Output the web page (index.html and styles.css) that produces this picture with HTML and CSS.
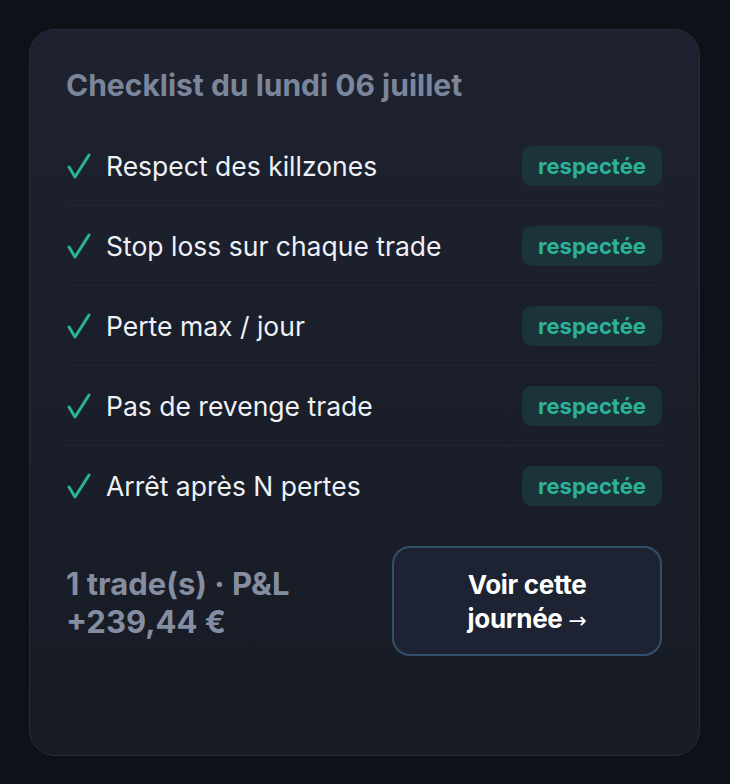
FILE: index.html
```html
<!DOCTYPE html>
<html lang="fr">
<head>
    <meta charset="UTF-8">
    <meta name="viewport" content="width=device-width, initial-scale=1.0">
    <title>Checklist du jour</title>
    <link rel="stylesheet" href="styles.css">
</head>
<body>

    <!-- Daily checklist card -->
    <div class="day-card">
        <h3 class="day-title">Checklist du lundi 06 juillet</h3>

        <ul class="rules">
            <li class="rule">
                <svg class="check" viewBox="0 0 24 26"><path d="M2 14 L8 24 L22 2"/></svg>
                <span class="rule-name">Respect des killzones</span>
                <span class="badge">respectée</span>
            </li>
            <li class="rule">
                <svg class="check" viewBox="0 0 24 26"><path d="M2 14 L8 24 L22 2"/></svg>
                <span class="rule-name">Stop loss sur chaque trade</span>
                <span class="badge">respectée</span>
            </li>
            <li class="rule">
                <svg class="check" viewBox="0 0 24 26"><path d="M2 14 L8 24 L22 2"/></svg>
                <span class="rule-name">Perte max / jour</span>
                <span class="badge">respectée</span>
            </li>
            <li class="rule">
                <svg class="check" viewBox="0 0 24 26"><path d="M2 14 L8 24 L22 2"/></svg>
                <span class="rule-name">Pas de revenge trade</span>
                <span class="badge">respectée</span>
            </li>
            <li class="rule">
                <svg class="check" viewBox="0 0 24 26"><path d="M2 14 L8 24 L22 2"/></svg>
                <span class="rule-name">Arrêt après N pertes</span>
                <span class="badge">respectée</span>
            </li>
        </ul>

        <div class="day-footer">
            <div class="day-summary">1 trade(s) · P&amp;L<br>+239,44 €</div>
            <button class="day-link">Voir cette<br>journée <span class="arrow">→</span></button>
        </div>
    </div>

</body>
</html>
```

FILE: styles.css
```css
body {
    margin: 0;
    background-color: #0e1117;
    font-family: Inter, "Noto Sans", sans-serif;
    padding: 29px 30px 29px 29px;
}

/* Card */
.day-card {
    box-sizing: border-box;
    width: 671px;
    height: 727px;
    padding: 37px 37px 0 36px;
    border: 1px solid #262c3a;
    border-radius: 26px;
    background: linear-gradient(180deg, #1e2230 0%, #171b24 100%);
}
.day-title {
    margin: 0 0 23px 0;
    font-size: 30px;
    line-height: 36px;
    font-weight: 700;
    color: #7b869b;
}

/* Rules list */
.rules {
    list-style: none;
    margin: 0;
    padding: 0;
}
.rule {
    display: flex;
    align-items: center;
    height: 79px;
    border-bottom: 1px solid #222736;
}
.rule:last-child {
    border-bottom: none;
}
.check {
    width: 24px;
    height: 26px;
    margin-left: 1px;
    margin-right: 15px;
    fill: none;
    stroke: #2bb39a;
    stroke-width: 3;
    stroke-linecap: round;
    stroke-linejoin: round;
}
.rule-name {
    flex: 1;
    font-size: 26.5px;
    color: #eef1f6;
}
.badge {
    width: 140px;
    height: 40px;
    line-height: 40px;
    text-align: center;
    border-radius: 10px;
    background-color: #1b3439;
    color: #2bb39a;
    font-size: 22px;
    font-weight: 700;
}

/* Footer */
.day-footer {
    display: flex;
    justify-content: space-between;
    align-items: center;
    margin-top: 21px;
}
.day-summary {
    padding-top: 4px;
    font-size: 31px;
    line-height: 38px;
    font-weight: 700;
    color: #858ea1;
}
.day-link {
    width: 270px;
    height: 110px;
    padding-top: 5px;
    border: 2px solid #33506a;
    border-radius: 18px;
    background-color: #1d2333;
    color: #ffffff;
    font-family: Inter, "Noto Sans", sans-serif;
    font-size: 26px;
    line-height: 34px;
    font-weight: 700;
    letter-spacing: -0.3px;
    cursor: pointer;
}
.arrow {
    font-family: "DejaVu Sans", sans-serif;
    font-weight: 400;
    font-size: 22px;
}
```
